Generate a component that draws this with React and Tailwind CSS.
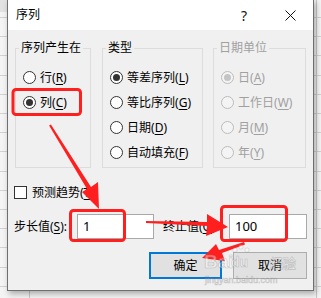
const F = { fontFamily: '"Noto Sans","Noto Sans CJK SC",sans-serif' };

function Radio({ checked, disabled, label, u, rest }) {
  return (
    <div className="flex h-[25px] items-center gap-[4px]">
      <span
        className={
          "flex h-[13px] w-[13px] items-center justify-center rounded-full border " +
          (disabled ? "border-[#bcbcbc] bg-[#f4f4f4]" : "border-[#333333] bg-white")
        }
      >
        {checked && (
          <span className={"h-[7px] w-[7px] rounded-full " + (disabled ? "bg-[#c4c4c4]" : "bg-[#333333]")} />
        )}
      </span>
      <span className={"text-[12px] leading-[16px] " + (disabled ? "text-[#a0a0a0]" : "text-black")}>
        {label}(<span className="underline underline-offset-2">{u}</span>){rest}
      </span>
    </div>
  );
}

function Group({ title, w, disabled, children }) {
  return (
    <fieldset className={"h-[128px] border border-[#dcdcdc] " + w}>
      <legend className={"ml-[3px] px-[2px] text-[12px] leading-[16px] " + (disabled ? "text-[#a0a0a0]" : "text-black")}>
        {title}
      </legend>
      <div className="flex flex-col pl-[7px] pt-[9px]">{children}</div>
    </fieldset>
  );
}

export default function App() {
  return (
    <div
      className="relative h-[298px] w-[321px] overflow-hidden bg-[#f4f4f4] bg-[repeating-linear-gradient(to_bottom,transparent_0px,transparent_17px,#d2d2d2_17px,#d2d2d2_18px,transparent_18px,transparent_19.2px)]"
      style={F}
    >
      <div className="absolute left-0 top-0 h-[12px] w-[7px] bg-[#e2e2e2]" />
      <div className="absolute left-[29px] top-[285px] h-[13px] w-px bg-[#c8c8c8]" />
      <div className="absolute left-[316px] top-0 h-[298px] w-px bg-[#c8c8c8]" />

      {/* dialog window */}
      <div className="absolute left-[7px] top-[-1px] flex h-[292px] w-[307px] flex-col border border-[#6f6f6f] bg-[#f0f0f0] shadow-[2px_3px_6px_rgba(0,0,0,0.3)]">
        <div className="flex h-[30px] items-center bg-white">
          <span className="pl-[8px] text-[12px] leading-[16px] text-black">序列</span>
          <div className="ml-auto flex h-full">
            <div className="flex w-[46px] items-center justify-center text-[14px] text-[#111]">?</div>
            <div className="flex w-[46px] items-center justify-center">
              <svg width="11" height="11" viewBox="0 0 11 11">
                <path d="M0.5 0.5 L10.5 10.5 M10.5 0.5 L0.5 10.5" stroke="#111" strokeWidth="1" fill="none" />
              </svg>
            </div>
          </div>
        </div>

        <div className="flex flex-1 flex-col">
          <div className="ml-[7px] mt-[10px] flex gap-[10px]">
            <Group title="序列产生在" w="w-[76px] mr-[1px]">
              <Radio label="行" u="R" />
              <Radio label="列" u="C" checked />
            </Group>
            <Group title="类型" w="w-[101px]">
              <Radio label="等差序列" u="L" checked />
              <Radio label="等比序列" u="G" />
              <Radio label="日期" u="D" />
              <Radio label="自动填充" u="F" />
            </Group>
            <Group title="日期单位" w="w-[93px]" disabled>
              <Radio label="日" u="A" checked disabled />
              <Radio label="工作日" u="W" disabled />
              <Radio label="月" u="M" disabled />
              <Radio label="年" u="Y" disabled />
            </Group>
          </div>

          <div className="ml-[6px] mt-[18px] flex h-[13px] items-center gap-[5px]">
            <span className="h-[13px] w-[13px] border border-[#333333] bg-white" />
            <span className="text-[12px] leading-[16px] text-black">
              预测趋势(<span className="underline underline-offset-2">T</span>)
            </span>
          </div>

          <div className="ml-[6px] mt-[15px] flex h-[25px] items-center">
            <span className="w-[63px] text-[12px] leading-[16px] text-black">
              步长值(<span className="underline underline-offset-2">S</span>):
            </span>
            <div className="flex h-[25px] w-[77px] items-center border border-[#a9a9a9] bg-white pl-[5px] text-[13px] text-black">
              1
            </div>
            <span className="ml-[9px] w-[66px] text-[12px] leading-[16px] text-black">
              终止值(<span className="underline underline-offset-2">O</span>):
            </span>
            <div className="flex h-[25px] w-[78px] items-center border border-[#a9a9a9] bg-white pl-[5px] text-[13px] text-black">
              100
            </div>
          </div>

          <div className="mt-[13px] flex justify-end gap-[11px] pr-[6px]">
            <div className="flex h-[27px] w-[73px] items-center justify-center border-2 border-[#0078d7] bg-[#e1e1e1] text-[12px] text-black">
              确定
            </div>
            <div className="flex h-[27px] w-[74px] items-center justify-center border border-[#adadad] bg-[#e1e1e1] text-[12px] text-black">
              取消
            </div>
          </div>
        </div>
      </div>

      {/* annotations overlay */}
      <svg className="pointer-events-none absolute left-0 top-0" width="321" height="298" viewBox="0 0 321 298">
        <g fill="none" stroke="#ff1f1f" strokeWidth="3">
          <rect x="13" y="89.5" width="67.5" height="25" rx="3" />
          <rect x="70.5" y="210.5" width="54" height="30" rx="3" />
          <rect x="221.5" y="206.5" width="65" height="34" rx="3" />
        </g>
        <g fill="#ff1f1f">
          <polygon points="49.1,125.5 50.9,124.5 91,187 98,182 99,209 82,192 87,189" />
          <polygon points="146,221 146,223 207,226 206,236 228,227 207,214 207,222" />
          <polygon points="244,242 245,244.5 222,253 225,261 202,258 216,244 219,250" />
        </g>
        <g opacity="0.4" fontFamily="Liberation Sans, sans-serif" fontWeight="bold" fill="#ffffff" stroke="#8a8a8a" strokeWidth="0.6">
          <text x="204" y="268" fontSize="19">Bai</text>
          <circle cx="235" cy="250" r="2.2" />
          <circle cx="241" cy="247" r="2.2" />
          <circle cx="247" cy="250" r="2.2" />
          <text x="231" y="267" fontSize="14">du</text>
          <text x="270" y="268" fontSize="13" fontFamily="Noto Sans CJK SC, sans-serif">经验</text>
          <text x="205" y="283" fontSize="9" fontWeight="normal">jingyan.baidu.com</text>
        </g>
      </svg>
    </div>
  );
}
